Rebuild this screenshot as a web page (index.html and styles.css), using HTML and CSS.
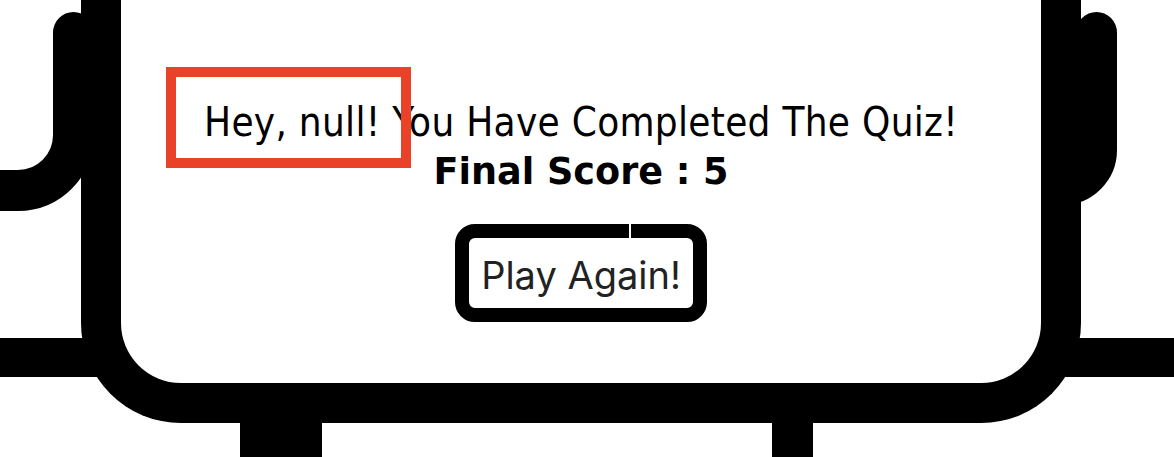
FILE: index.html
```html
<!DOCTYPE html>
<html lang="en">
<head>
<meta charset="utf-8">
<title>Quiz Complete</title>
<link rel="stylesheet" href="styles.css">
</head>
<body>
<div class="scene">
  <svg class="figure" width="1174" height="457" viewBox="0 0 1174 457" aria-hidden="true">
    <rect x="0" y="338" width="1174" height="39" fill="#000"/>
    <rect x="240" y="400" width="41" height="70" fill="#000"/>
    <rect x="281" y="400" width="41" height="70" fill="#000"/>
    <rect x="772" y="400" width="41" height="70" fill="#000"/>
    <path d="M73.5 32.5 V135 A55.5 55.5 0 0 1 18 190.5 H-60" fill="none" stroke="#000" stroke-width="41" stroke-linecap="round"/>
    <path d="M1096.5 32.5 V150 A34.5 34.5 0 0 1 1062 184.5 H1000" fill="none" stroke="#000" stroke-width="41" stroke-linecap="round"/>
  </svg>
  <main class="card">
    <h1 class="title">Hey, null! You Have Completed The Quiz!</h1>
    <h2 class="score">Final Score : 5</h2>
    <button class="again" type="button">Play Again!</button>
  </main>
  <div class="highlight"></div>
</div>
</body>
</html>
```
FILE: styles.css
```css
* { box-sizing: border-box; }

html, body {
  margin: 0;
  padding: 0;
  background: #fff;
}

body {
  width: 1174px;
  height: 457px;
  overflow: hidden;
}

.scene {
  position: relative;
  width: 1174px;
  height: 457px;
}

.figure {
  position: absolute;
  left: 0;
  top: 0;
  z-index: 0;
}

.card {
  position: relative;
  z-index: 1;
  margin-left: 81px;
  width: 1000px;
  height: 423px;
  background: #fff;
  border: 40px solid #000;
  border-top: 0;
  border-radius: 0 0 100px 100px;
  display: flex;
  flex-direction: column;
  align-items: center;
  padding-top: 98px;
}

.title {
  margin: 0;
  font-family: "DejaVu Sans Condensed", "DejaVu Sans", sans-serif;
  font-stretch: condensed;
  font-weight: normal;
  font-size: 40px;
  letter-spacing: 0.3px;
  line-height: 48px;
  color: #000;
  white-space: nowrap;
}

.score {
  margin: 4px 0 0;
  font-family: "DejaVu Sans", sans-serif;
  font-weight: bold;
  font-size: 36.6px;
  line-height: 44px;
  color: #000;
  white-space: nowrap;
}

.again {
  position: relative;
  margin-top: 30px;
  width: 252px;
  height: 98px;
  padding: 3px 0 0;
  background: #fff;
  border: 14px solid #000;
  border-radius: 20px;
  font-family: Inter, "Liberation Sans", sans-serif;
  font-size: 38px;
  color: #222;
  line-height: 1;
}

.again::after {
  content: "";
  position: absolute;
  top: -14px;
  left: 160px;
  width: 2px;
  height: 14px;
  background: #fff;
}

.highlight {
  position: absolute;
  z-index: 2;
  left: 166px;
  top: 67px;
  width: 245px;
  height: 101px;
  border: 10px solid #ea4129;
}
```
